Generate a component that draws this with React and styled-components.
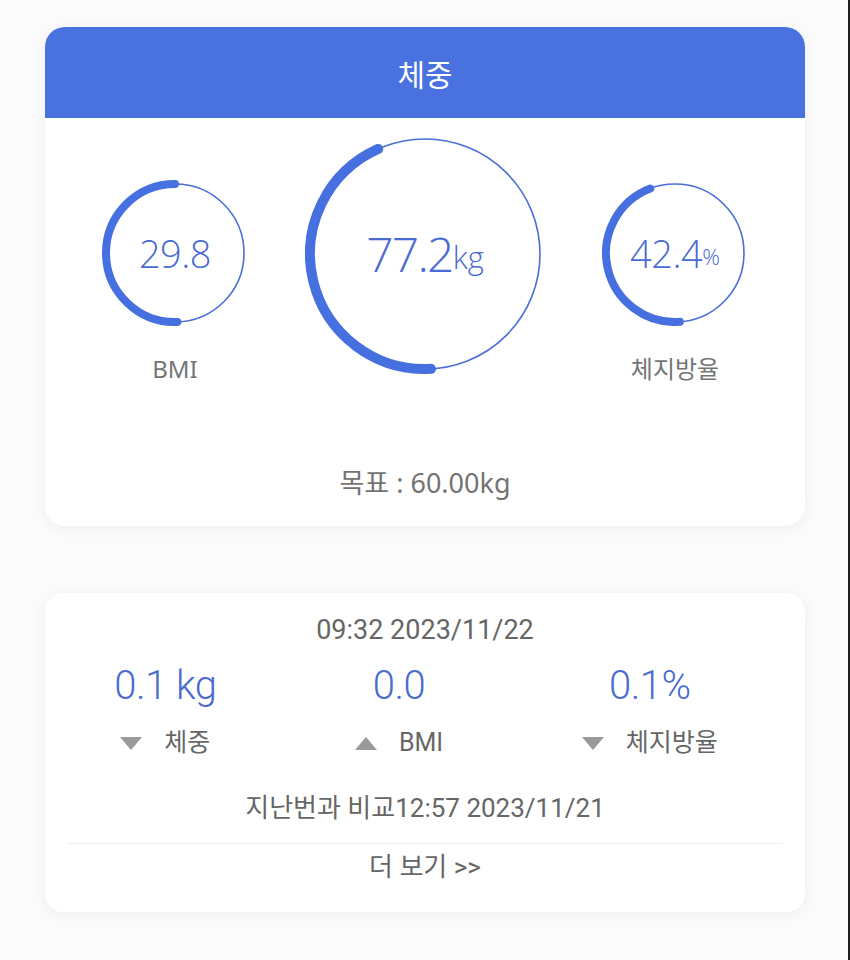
import React from "react";
import styled, { createGlobalStyle } from "styled-components";

const GlobalStyle = createGlobalStyle`
  html, body {
    margin: 0;
    padding: 0;
    background: #fbfbfc;
  }
  * { box-sizing: border-box; }
`;

const KR = `"Noto Sans", "Noto Sans CJK KR", sans-serif`;
const SYS = `Roboto, "Noto Sans CJK KR", sans-serif`;

const Page = styled.div`
  width: 850px;
  min-height: 960px;
  padding: 27px 43px 40px 45px;
  border-right: 2px solid #1e1e1e;
  display: flex;
  flex-direction: column;
  gap: 67px;
  background: #fbfbfc;
`;

const Card = styled.section`
  background: #ffffff;
  border-radius: 20px;
  box-shadow: 0 2px 14px rgba(0, 0, 0, 0.06);
  overflow: hidden;
`;

const Header = styled.header`
  height: 91px;
  background: #4a71e0;
  color: #ffffff;
  display: flex;
  align-items: center;
  justify-content: center;
  font-family: ${KR};
  font-size: 30px;
  font-weight: 400;
`;

const Body = styled.div`
  padding: 16px 0 29px;
  display: flex;
  flex-direction: column;
  align-items: stretch;
`;

const GaugeRow = styled.div`
  display: flex;
  justify-content: space-evenly;
  align-items: flex-start;
`;

const SideCol = styled.div`
  margin-top: 46px;
  display: flex;
  flex-direction: column;
  align-items: center;
  gap: 29px;
`;

const SideLabel = styled.div`
  font-family: ${KR};
  font-size: 24px;
  line-height: 28px;
  color: #757575;
`;

const GaugeBox = styled.div`
  position: relative;
  width: ${(p) => p.$size}px;
  height: ${(p) => p.$size}px;
  flex: none;
`;

const GaugeValue = styled.div`
  position: absolute;
  inset: 0;
  display: flex;
  align-items: center;
  justify-content: center;
  color: #4a6bd3;
  font-family: "Open Sans", "Noto Sans", sans-serif;
  font-weight: 300;
  font-size: ${(p) => p.$fs}px;
  letter-spacing: ${(p) => p.$ls}px;
  line-height: 1;
`;

const Unit = styled.span`
  font-size: ${(p) => p.$fs}px;
  letter-spacing: 0;
  margin-top: ${(p) => p.$shift || 0}px;
`;

const Goal = styled.div`
  margin-top: 86px;
  text-align: center;
  font-family: ${KR};
  font-size: 27px;
  line-height: 28px;
  color: #737373;
`;

const SummaryCard = styled.section`
  background: #ffffff;
  border-radius: 18px;
  box-shadow: 0 2px 14px rgba(0, 0, 0, 0.06);
  padding: 22px 0 30px;
  display: flex;
  flex-direction: column;
  font-family: ${SYS};
`;

const Stamp = styled.div`
  text-align: center;
  font-size: 27px;
  line-height: 30px;
  color: #666666;
`;

const StatsRow = styled.div`
  margin-top: 17px;
  display: flex;
  justify-content: space-around;
  padding-right: 18px;
`;

const StatCol = styled.div`
  display: flex;
  flex-direction: column;
  align-items: center;
  gap: 18px;
`;

const StatValue = styled.div`
  font-size: 40px;
  line-height: 48px;
  font-weight: 300;
  color: #4a6cce;
  letter-spacing: -0.5px;
`;

const StatLabel = styled.div`
  display: flex;
  align-items: center;
  gap: 22px;
  font-size: 25px;
  line-height: 30px;
  color: #666666;
`;

const Compare = styled.div`
  margin-top: 35px;
  text-align: center;
  font-size: 26px;
  line-height: 30px;
  color: #666666;
`;

const Divider = styled.hr`
  margin: 20px 22px 8px;
  border: none;
  border-top: 1px solid #f0f0f0;
  height: 0;
`;

const More = styled.div`
  text-align: center;
  font-size: 26px;
  line-height: 30px;
  color: #666666;
`;

const pt = (cx, cy, r, deg) => {
  const a = (deg * Math.PI) / 180;
  return [cx + r * Math.sin(a), cy - r * Math.cos(a)];
};

const arcPath = (cx, cy, r, a1, a2) => {
  const [x1, y1] = pt(cx, cy, r, a1);
  const [x2, y2] = pt(cx, cy, r, a2);
  const large = a2 - a1 > 180 ? 1 : 0;
  return `M ${x1} ${y1} A ${r} ${r} 0 ${large} 1 ${x2} ${y2}`;
};

function Gauge({ size, r, thick, a1, a2, fs, ls = -0.5, children }) {
  const c = size / 2;
  return (
    <GaugeBox $size={size}>
      <svg width={size} height={size} viewBox={`0 0 ${size} ${size}`}>
        <circle cx={c} cy={c} r={r} fill="none" stroke="#4a6fd6" strokeWidth="1.6" />
        <path
          d={arcPath(c, c, r, a1, a2)}
          fill="none"
          stroke="#4670e0"
          strokeWidth={thick}
          strokeLinecap="round"
        />
      </svg>
      <GaugeValue $fs={fs} $ls={ls}>{children}</GaugeValue>
    </GaugeBox>
  );
}

const Triangle = ({ up }) => (
  <svg width="22" height="13" viewBox="0 0 22 13">
    <path d={up ? "M11 0 L22 13 L0 13 Z" : "M0 0 L22 0 L11 13 Z"} fill="#9a9a9a" />
  </svg>
);

const stats = [
  { value: "0.1 kg", label: "체중", up: false },
  { value: "0.0", label: "BMI", up: true },
  { value: "0.1%", label: "체지방율", up: false },
];

export default function App() {
  return (
    <>
      <GlobalStyle />
      <Page>
        <Card>
          <Header>체중</Header>
          <Body>
            <GaugeRow>
              <SideCol>
                <Gauge size={146} r={69} thick={8} a1={178} a2={360} fs={38}>
                  29.8
                </Gauge>
                <SideLabel>BMI</SideLabel>
              </SideCol>
              <Gauge size={240} r={115} thick={10} a1={177} a2={336} fs={48} ls={-1.8}>
                77.2<Unit $fs={31} $shift={6}>kg</Unit>
              </Gauge>
              <SideCol>
                <Gauge size={146} r={69} thick={8} a1={176} a2={339} fs={38}>
                  42.4<Unit $fs={22} $shift={6}>%</Unit>
                </Gauge>
                <SideLabel>체지방율</SideLabel>
              </SideCol>
            </GaugeRow>
            <Goal>목표 : 60.00kg</Goal>
          </Body>
        </Card>

        <SummaryCard>
          <Stamp>09:32 2023/11/22</Stamp>
          <StatsRow>
            {stats.map((s) => (
              <StatCol key={s.label}>
                <StatValue>{s.value}</StatValue>
                <StatLabel>
                  <Triangle up={s.up} />
                  <span>{s.label}</span>
                </StatLabel>
              </StatCol>
            ))}
          </StatsRow>
          <Compare>지난번과 비교12:57 2023/11/21</Compare>
          <Divider />
          <More>더 보기 &gt;&gt;</More>
        </SummaryCard>
      </Page>
    </>
  );
}
